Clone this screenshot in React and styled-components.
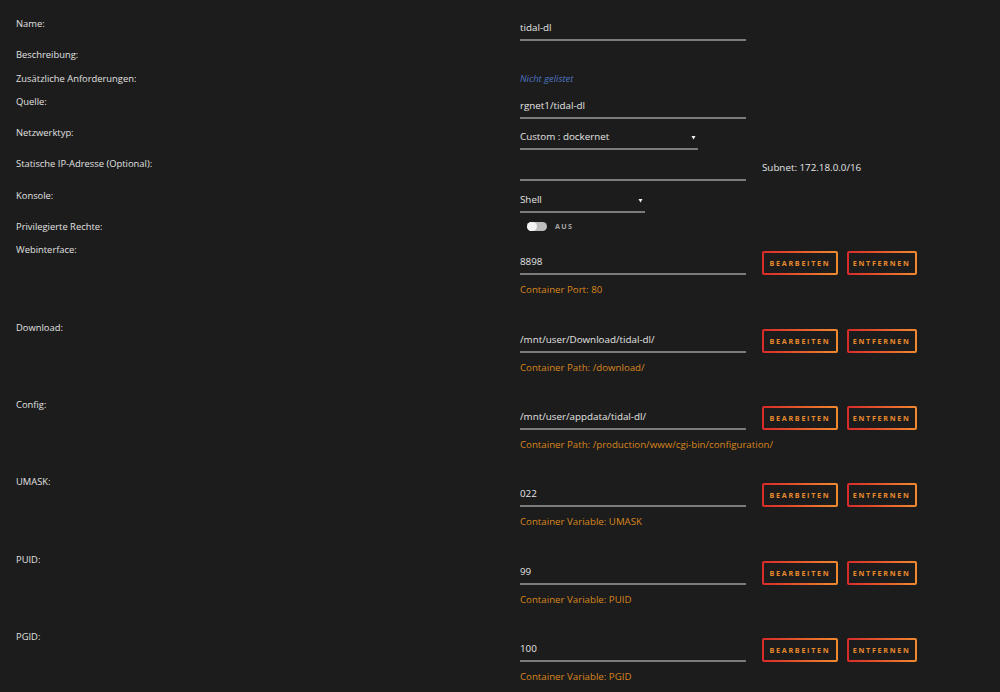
import React from 'react';
import styled, { createGlobalStyle } from 'styled-components';

const Global = createGlobalStyle`
  html, body { margin: 0; padding: 0; background: #1c1c1c; }
  body { font-family: "Open Sans", "Noto Sans", sans-serif; }
`;

const Page = styled.div`
  width: 1000px;
  height: 692px;
  overflow: hidden;
  box-sizing: border-box;
  padding: 17px 0 0 16px;
  background: #1c1c1c;
  color: #e2e2e2;
`;

const Row = styled.div`
  display: flex;
  align-items: flex-start;
  height: ${(p) => p.$h}px;
`;

const Label = styled.div`
  width: 504px;
  flex: none;
  font-size: 9.4px;
  line-height: 14px;
  color: #e0e0e0;
`;

const Value = styled.div`
  display: flex;
  flex-direction: column;
  padding-top: ${(p) => p.$pt || 0}px;
`;

const Line = styled.div`
  display: flex;
  align-items: flex-start;
`;

const Field = styled.div`
  width: ${(p) => p.$w}px;
  height: 24px;
  box-sizing: border-box;
  padding: 4px 2px 0 0;
  border-bottom: 2px solid #7c7c7c;
  font-size: 9.8px;
  line-height: 14px;
  color: #e4e4e4;
  display: flex;
  justify-content: space-between;
`;

const Arrow = styled.svg`
  width: 5px;
  height: 5px;
  margin-top: 5px;
`;

const Muted = styled.div`
  font-size: 9.4px;
  line-height: 14px;
  font-style: italic;
  color: #4d74c2;
`;

const Side = styled.div`
  margin-left: 16px;
  padding-top: 4px;
  font-size: 9.8px;
  line-height: 14px;
  color: #e4e4e4;
`;

const Buttons = styled.div`
  display: flex;
  gap: 9px;
  margin-left: 16px;
`;

const Button = styled.button`
  height: 24px;
  box-sizing: border-box;
  padding: 0 ${(p) => p.$px}px;
  border: 2px solid transparent;
  border-radius: 2px;
  background:
    linear-gradient(#1c1c1c, #1c1c1c) padding-box,
    linear-gradient(90deg, #d92a2a, #f08a30) border-box;
  color: #e88a2c;
  font-family: "Open Sans", "Noto Sans", sans-serif;
  font-size: 7.2px;
  font-weight: 700;
  letter-spacing: 1.7px;
  text-transform: uppercase;
  line-height: 20px;
  cursor: pointer;
`;

const Caption = styled.div`
  margin-top: 8px;
  font-size: 9.7px;
  line-height: 14px;
  color: #d8861f;
`;

const ToggleWrap = styled.div`
  display: flex;
  align-items: center;
  gap: 8px;
  margin: 1px 0 0 7px;
`;

const Track = styled.div`
  position: relative;
  width: 20px;
  height: 9px;
  border-radius: 5px;
  background: #bdbdbd;
`;

const Knob = styled.div`
  position: absolute;
  left: 0;
  top: 0;
  width: 10px;
  height: 9px;
  border-radius: 5px;
  background: #f4f4f4;
`;

const ToggleText = styled.span`
  font-size: 7.2px;
  font-weight: 700;
  letter-spacing: 1.3px;
  color: #a8a8a8;
`;

const DownArrow = () => (
  <Arrow viewBox="0 0 10 10">
    <path d="M1 2 H9 L5 9 Z" fill="#f2f2f2" />
  </Arrow>
);

const paths = [
  { label: 'Webinterface:', value: '8898', caption: 'Container Port: 80' },
  { label: 'Download:', value: '/mnt/user/Download/tidal-dl/', caption: 'Container Path: /download/' },
  { label: 'Config:', value: '/mnt/user/appdata/tidal-dl/', caption: 'Container Path: /production/www/cgi-bin/configuration/' },
  { label: 'UMASK:', value: '022', caption: 'Container Variable: UMASK' },
  { label: 'PUID:', value: '99', caption: 'Container Variable: PUID' },
  { label: 'PGID:', value: '100', caption: 'Container Variable: PGID' },
];

export default function App() {
  return (
    <>
      <Global />
      <Page>
        <Row $h={31.3}>
          <Label>Name:</Label>
          <Field $w={226}>tidal-dl</Field>
        </Row>
        <Row $h={23.3}>
          <Label>Beschreibung:</Label>
        </Row>
        <Row $h={23.3}>
          <Label>Zusätzliche Anforderungen:</Label>
          <Muted>Nicht gelistet</Muted>
        </Row>
        <Row $h={31.3}>
          <Label>Quelle:</Label>
          <Field $w={226}>rgnet1/tidal-dl</Field>
        </Row>
        <Row $h={31.3}>
          <Label>Netzwerktyp:</Label>
          <Field $w={178}>
            <span>Custom : dockernet</span>
            <DownArrow />
          </Field>
        </Row>
        <Row $h={31.3}>
          <Label>Statische IP-Adresse (Optional):</Label>
          <Line>
            <Field $w={226} />
            <Side>Subnet: 172.18.0.0/16</Side>
          </Line>
        </Row>
        <Row $h={31.3}>
          <Label>Konsole:</Label>
          <Field $w={125}>
            <span>Shell</span>
            <DownArrow />
          </Field>
        </Row>
        <Row $h={23.3}>
          <Label>Privilegierte Rechte:</Label>
          <ToggleWrap>
            <Track>
              <Knob />
            </Track>
            <ToggleText>AUS</ToggleText>
          </ToggleWrap>
        </Row>
        {paths.map((p) => (
          <Row $h={77.3} key={p.label}>
            <Label>{p.label}</Label>
            <Value $pt={8}>
              <Line>
                <Field $w={226}>{p.value}</Field>
                <Buttons>
                  <Button $px={5.5}>Bearbeiten</Button>
                  <Button $px={4}>Entfernen</Button>
                </Buttons>
              </Line>
              <Caption>{p.caption}</Caption>
            </Value>
          </Row>
        ))}
      </Page>
    </>
  );
}
